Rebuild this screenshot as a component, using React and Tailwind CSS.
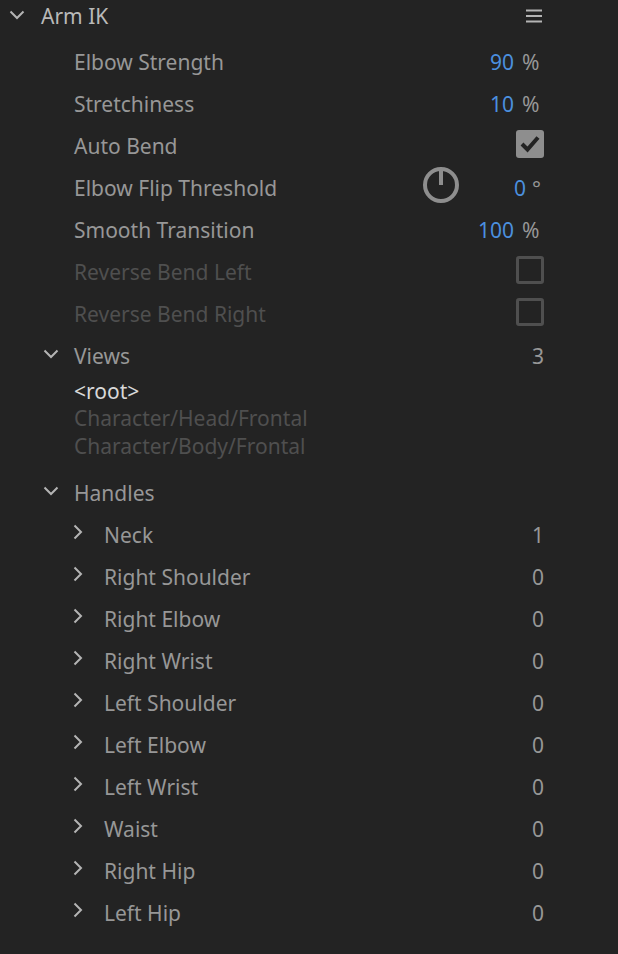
const font = { fontFamily: '"Noto Sans", sans-serif' };

function Down({ className }) {
  return (
    <svg width="16" height="10" viewBox="0 0 16 10" fill="none" stroke="#b4b4b4" strokeWidth="2" className={className}>
      <path d="M1.5 1.5 L8 8 L14.5 1.5" />
    </svg>
  );
}
function Right({ className }) {
  return (
    <svg width="10" height="16" viewBox="0 0 10 16" fill="none" stroke="#b4b4b4" strokeWidth="2" className={className}>
      <path d="M1.5 1.5 L8 8 L1.5 14.5" />
    </svg>
  );
}
function Prop({ label, value, unit, dim }) {
  return (
    <div className="flex h-[42px] items-center pl-[74px] pr-[78px]">
      <span className={dim ? "text-[#4f4f4f]" : "text-[#979797]"}>{label}</span>
      <span className="ml-auto text-[#4b8fdf]">{value}</span>
      {unit && <span className="ml-[8px] w-[18px] text-[#979797]">{unit}</span>}
    </div>
  );
}
function CheckRow({ label, checked, dim }) {
  return (
    <div className="flex h-[42px] items-center pl-[74px] pr-[74px]">
      <span className={dim ? "text-[#4f4f4f]" : "text-[#979797]"}>{label}</span>
      {checked ? (
        <span className="mb-[4px] ml-auto flex h-[28px] w-[28px] items-center justify-center rounded-[3px] bg-[#8e8e8e]">
          <svg width="20" height="18" viewBox="0 0 20 18" fill="none" stroke="#232323" strokeWidth="4">
            <path d="M2 9 L7.5 14.5 L18 2.5" />
          </svg>
        </span>
      ) : (
        <span className="mb-[4px] ml-auto h-[28px] w-[28px] rounded-[3px] border-[3px] border-[#4f4f4f]" />
      )}
    </div>
  );
}
function Handle({ name, n }) {
  return (
    <div className="flex h-[42px] items-center pl-[73px] pr-[74px]">
      <Right className="mb-[7px] w-[10px]" />
      <span className="ml-[21px] text-[#979797]">{name}</span>
      <span className="ml-auto text-[#979797]">{n}</span>
    </div>
  );
}

export default function App() {
  const handles = [
    ["Neck", 1], ["Right Shoulder", 0], ["Right Elbow", 0], ["Right Wrist", 0], ["Left Shoulder", 0],
    ["Left Elbow", 0], ["Left Wrist", 0], ["Waist", 0], ["Right Hip", 0], ["Left Hip", 0],
  ];
  return (
    <div style={font} className="h-[954px] w-[618px] overflow-hidden bg-[#232323] text-[21px] leading-[28px]">
      <div className="flex h-[32px] items-center pl-[9px] pr-[76px]">
        <Down className="mb-[3px]" />
        <span className="ml-[16px] text-[#b9b9b9]">Arm IK</span>
        <svg width="16" height="14" viewBox="0 0 16 14" stroke="#b4b4b4" strokeWidth="2" className="ml-auto">
          <path d="M0 1.5 H16 M0 7 H16 M0 12.5 H16" />
        </svg>
      </div>
      <div className="mt-[9px]">
        <Prop label="Elbow Strength" value="90" unit="%" />
        <Prop label="Stretchiness" value="10" unit="%" />
        <CheckRow label="Auto Bend" checked />
        <div className="flex h-[42px] items-center pl-[74px] pr-[78px]">
          <span className="text-[#979797]">Elbow Flip Threshold</span>
          <svg width="38" height="38" viewBox="0 0 38 38" fill="none" stroke="#8e8e8e" strokeWidth="4" className="mb-[6px] ml-auto">
            <circle cx="19" cy="19" r="16" />
            <path d="M19 2 V19" />
          </svg>
          <span className="ml-[54px] text-[#4b8fdf]">0</span>
          <span className="ml-[6px] w-[8px] text-[#979797]">°</span>
        </div>
        <Prop label="Smooth Transition" value="100" unit="%" />
        <CheckRow label="Reverse Bend Left" dim />
        <CheckRow label="Reverse Bend Right" dim />
        <div className="flex h-[42px] items-center pl-[43px] pr-[74px]">
          <Down className="mb-[5px]" />
          <span className="ml-[15px] text-[#979797]">Views</span>
          <span className="ml-auto text-[#979797]">3</span>
        </div>
        <div className="pl-[74px]">
          <div className="pt-[1px] leading-[26px] text-[#d8d8d8]">&lt;root&gt;</div>
          <div className="text-[#4f4f4f]">Character/Head/Frontal</div>
          <div className="text-[#4f4f4f]">Character/Body/Frontal</div>
        </div>
        <div className="mt-[12px] flex h-[42px] items-center pl-[43px] pr-[74px]">
          <Down className="mb-[5px]" />
          <span className="ml-[15px] text-[#979797]">Handles</span>
        </div>
        {handles.map(([name, n]) => (
          <Handle key={name} name={name} n={n} />
        ))}
      </div>
    </div>
  );
}
